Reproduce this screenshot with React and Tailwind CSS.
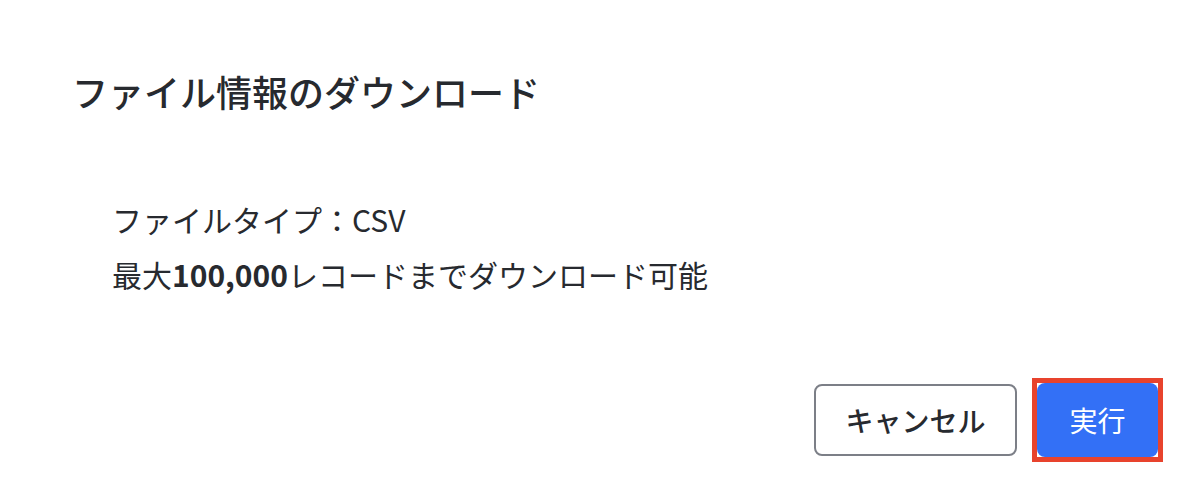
import React from 'react';

const FONT = "font-['Noto_Sans_CJK_JP','Noto_Sans',sans-serif]";

const App = () => {
  return (
    <div className={`w-full h-[494px] bg-white text-[#272a2f] flex flex-col ${FONT}`}>
      {/* Header */}
      <div className="pl-[72px] pt-[64px]">
        <h2 className="text-[36px] leading-[54px] font-medium">ファイル情報のダウンロード</h2>
      </div>

      {/* Body */}
      <div className="pl-[112px] pt-[74px] text-[30px] leading-[55px]">
        <p>ファイルタイプ：CSV</p>
        <p>
          最大<span className="font-bold">100,000</span>レコードまでダウンロード可能
        </p>
      </div>

      {/* Footer */}
      <div className="flex justify-end items-center gap-[15px] pr-[33px] pt-[76px]">
        <button className="w-[203px] h-[72px] rounded-[8px] border-2 border-[#7c7f87] bg-white text-[28px] font-medium text-[#272a2f]">
          キャンセル
        </button>
        {/* highlight frame */}
        <div className="border-[5px] border-[#e8432d]">
          <button className="block w-[121px] h-[74px] rounded-[8px] bg-[#3370f6] text-white text-[28px] font-normal">
            実行
          </button>
        </div>
      </div>
    </div>
  );
};

export default App;
